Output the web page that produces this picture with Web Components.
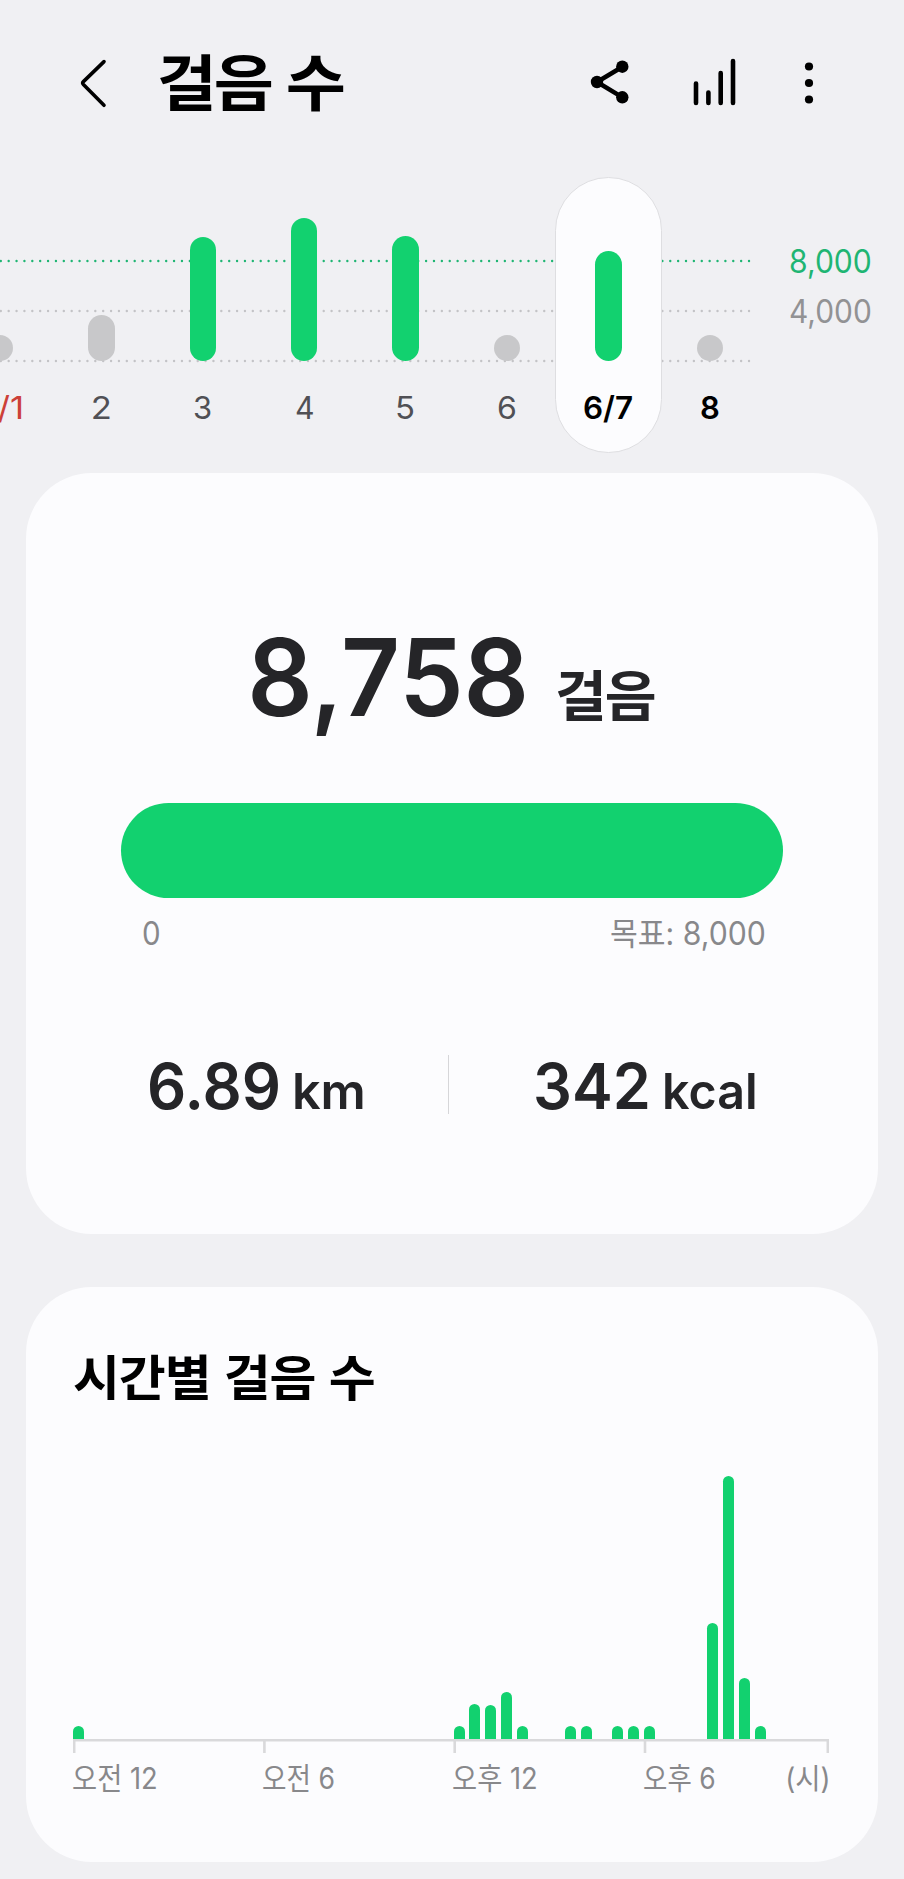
<!DOCTYPE html>
<html lang="ko"><head><meta charset="utf-8"><title>걸음 수</title>
<style>
html,body{margin:0;background:#f0f0f3}
body{width:904px;height:1879px;overflow:hidden;font-family:Inter,"Noto Sans CJK KR",sans-serif;color:#000}
</style></head><body>
<step-app></step-app>
<script>
const define=(name,css,html)=>customElements.define(name,class extends HTMLElement{
  constructor(){super();this.attachShadow({mode:'open'});}
  connectedCallback(){this.shadowRoot.innerHTML=`<style>*{box-sizing:border-box}${css}</style>`+(typeof html==='function'?html(this):html);}
});

/* A single line of text whose visible glyphs span exactly w pixels. */
const ctx=document.createElement('canvas').getContext('2d');
customElements.define('fit-text',class extends HTMLElement{
  constructor(){super();this.attachShadow({mode:'open'}).innerHTML='<style>:host{display:inline-block;white-space:nowrap}span{display:inline-block;transform-origin:0 50%}</style><span><slot></slot></span>';}
  connectedCallback(){
    const w=+this.getAttribute('w'),s=getComputedStyle(this);
    ctx.font=`${s.fontWeight} ${s.fontSize} ${s.fontFamily}`;
    const ls=parseFloat(s.letterSpacing)||0;
    ctx.letterSpacing=ls+'px';
    const m=ctx.measureText(this.textContent),k=w/(m.actualBoundingBoxLeft+m.actualBoundingBoxRight);
    this.style.width=w+'px';
    this.shadowRoot.querySelector('span').style.transform=`translateX(${m.actualBoundingBoxLeft*k}px) scaleX(${k})`;
  }
});

define('app-header',`
:host{display:flex;align-items:center;height:165px;padding:0 90.300px 0 76px}
h1{margin:0 auto 5.500px 47.700px;font:700 61px/90px "Noto Sans CJK KR",sans-serif;letter-spacing:-3px;white-space:nowrap}
svg{display:block;flex:none}.chart{margin:0 66.700px 0 63px}`,
`<svg width="36" height="60" viewBox="0 0 36 60" fill="none" stroke="#000" stroke-width="3.6" stroke-linecap="round" stroke-linejoin="round"><path d="M28 8.6 7.400 28.600Q6 30 7.400 31.500L28 52.300"/></svg>
<h1><fit-text w="180">걸음 수</fit-text></h1>
<svg width="40" height="50" viewBox="0 0 40 50"><path d="M32.500 8.700 7 24l25.500 15.400" fill="none" stroke="#000" stroke-width="4.600"/><circle cx="7" cy="24" r="6.200"/><circle cx="32.300" cy="8.700" r="6.200"/><circle cx="32.300" cy="39.300" r="6.200"/></svg>
<svg class="chart" width="44" height="50" viewBox="0 0 44 50" stroke="#000" stroke-width="4.600" stroke-linecap="round"><path d="M3 25.500V45M15.400 34.500V45M27.700 15V45M40 3V45"/></svg>
<svg width="10" height="44" viewBox="0 0 10 44"><circle cx="5" cy="5.500" r="4.100"/><circle cx="5" cy="22" r="4.100"/><circle cx="5" cy="38.500" r="4.100"/></svg>`);

define('day-column',`
:host{display:flex;flex-direction:column;align-items:center;justify-content:flex-end;width:106.430px;height:276px;margin:0 -2.500px;border-radius:54px;border:1px solid transparent;color:#505055;font-size:31.500px}
:host([selected]){background:#fcfcfe;border-color:#dedee1;color:#000;font-weight:600}
:host([strong]){color:#000;font-weight:600}
:host([sunday]){color:#cc4038}
i{display:block;width:26.500px;border-radius:14px;background:#c8c8ca}
:host([done]) i{background:#12d16f}
span{line-height:40px;margin:26.500px 0 24.500px;white-space:nowrap}`,
el=>`<i style="height:${el.getAttribute('h')}px"></i><span><fit-text w="${el.getAttribute('w')}">${el.textContent}</fit-text></span>`);

define('week-chart',`
:host{display:flex;position:relative;height:308px;padding-top:12px}
.days{display:flex;position:relative;margin-left:-50.750px}
svg{position:absolute;left:0;top:0}
.scale{margin-left:auto;padding:60px 33px 0 0;text-align:right;font-size:32px;line-height:50px;color:#929294}
.goal{color:#1fb573}`,()=>{
 const days=[['6/1',26.5,'sunday',45],['2',46,'',16.500],['3',124.5,'done',16.7],['4',143,'done',17.3],['5',125.5,'done',16.7],['6',26.5,'',17.3],['6/7',110,'done selected',48],['8',26.5,'strong',17.7]];
 const dots=(y,c)=>`<path d="M.8 ${y}H751" stroke="${c}"/>`;
 return `<svg width="760" height="220" fill="none" stroke-width="2.400" stroke-linecap="round" stroke-dasharray="0 7.876">${dots(96,'#1fb573')}${dots(146,'#c3c3c6')}${dots(196,'#c3c3c6')}</svg>
 <div class="days">${days.map(([l,h,a,w])=>`<day-column h="${h}" w="${w}" ${a}>${l}</day-column>`).join('')}</div>
 <div class="scale"><div class="goal"><fit-text w="80.700">8,000</fit-text></div><div><fit-text w="80.700">4,000</fit-text></div></div>`});

define('app-card',`:host{display:block;margin:0 26px;background:#fcfcfe;border-radius:66px;overflow:hidden}`,`<slot></slot>`);

define('step-summary',`
:host{display:block;height:761px;padding:139px 95px 0;color:#252528}
.total{display:flex;align-items:baseline;height:130px;margin-left:131px;font-size:107.300px;font-weight:600;line-height:130px}
.total small{font:700 55px/80px "Noto Sans CJK KR",sans-serif;margin-left:32.800px;letter-spacing:-2px}
.bar{height:95px;border-radius:48px;background:#12d16f;margin-top:60.700px}
.range{display:flex;justify-content:space-between;padding:0 18px 0 22px;font-size:32px;line-height:44px;color:#88888b;margin-top:14.700px}
.stats{display:flex;align-items:flex-start;margin-top:98.600px;height:60px;font-size:63.700px;font-weight:600;line-height:59px}
.stats div{display:flex;align-items:baseline;margin:1.300px 0 0 28.600px}
.stats hr+div{margin-left:87px}
.stats small{font-size:49.500px;margin-left:17.200px}
.stats hr{width:1px;height:59px;border:0;margin:0 0 0 85.200px;background:#d6d6d9}`,
`<div class="total"><fit-text w="272.700">8,758</fit-text><small><fit-text w="98">걸음</fit-text></small></div><div class="bar"></div>
<div class="range"><fit-text w="16.600">0</fit-text><fit-text w="153.700">목표: 8,000</fit-text></div>
<div class="stats"><div><fit-text w="128.300">6.89</fit-text><small><fit-text w="68.200">km</fit-text></small></div><hr><div><fit-text w="111.400">342</fit-text><small><fit-text w="89.700">kcal</fit-text></small></div></div>`);

define('hourly-steps',`
:host{display:block;height:575px;padding:48px 49px 0 47px}
h2{margin:0 0 0 1.300px;font:700 48.500px/80px "Noto Sans CJK KR",sans-serif;letter-spacing:-1px}
.plot{display:grid;grid-template-columns:repeat(48,11px);column-gap:4.860px;align-items:end;height:324px}
.plot i{border-radius:5.500px 5.500px 0 0;background:#12d16f}
svg{display:block}
.labels{display:grid;grid-template-columns:190.200px 190.200px 190.200px 1fr auto;font-size:29.300px;line-height:40px;color:#88888b;margin-top:6.300px}
.labels fit-text:last-child{margin-right:1.500px}`,()=>{
 const v={0:13.3,24:13.3,25:35,26:34.5,27:47,28:13.3,31:13.3,32:13.3,34:13.3,35:13.3,36:13.3,40:116.3,41:263.3,42:60.7,43:13.3};
 return `<h2><fit-text w="294.500">시간별 걸음 수</fit-text></h2><div class="plot">${Object.entries(v).map(([k,h])=>`<i style="grid-column:${+k+1};grid-row:1;height:${h}px"></i>`).join('')}</div>
 <svg width="756" height="14" fill="#d9d9db"><path d="M0 0H756V14H753.500V2.500H573.300V14H570.700V2.500H383V14H380.400V2.500H192.700V14H190.100V2.500H2.500V14H0z"/></svg>
 <div class="labels"><fit-text w="83">오전 12</fit-text><fit-text w="71">오전 6</fit-text><fit-text w="83">오후 12</fit-text><fit-text w="70.500">오후 6</fit-text><fit-text w="40">(시)</fit-text></div>`});

define('step-app',`:host{display:flex;flex-direction:column}app-card+app-card{margin-top:53px}`,
`<app-header></app-header><week-chart></week-chart><app-card><step-summary></step-summary></app-card><app-card><hourly-steps></hourly-steps></app-card>`);
</script></body></html>
